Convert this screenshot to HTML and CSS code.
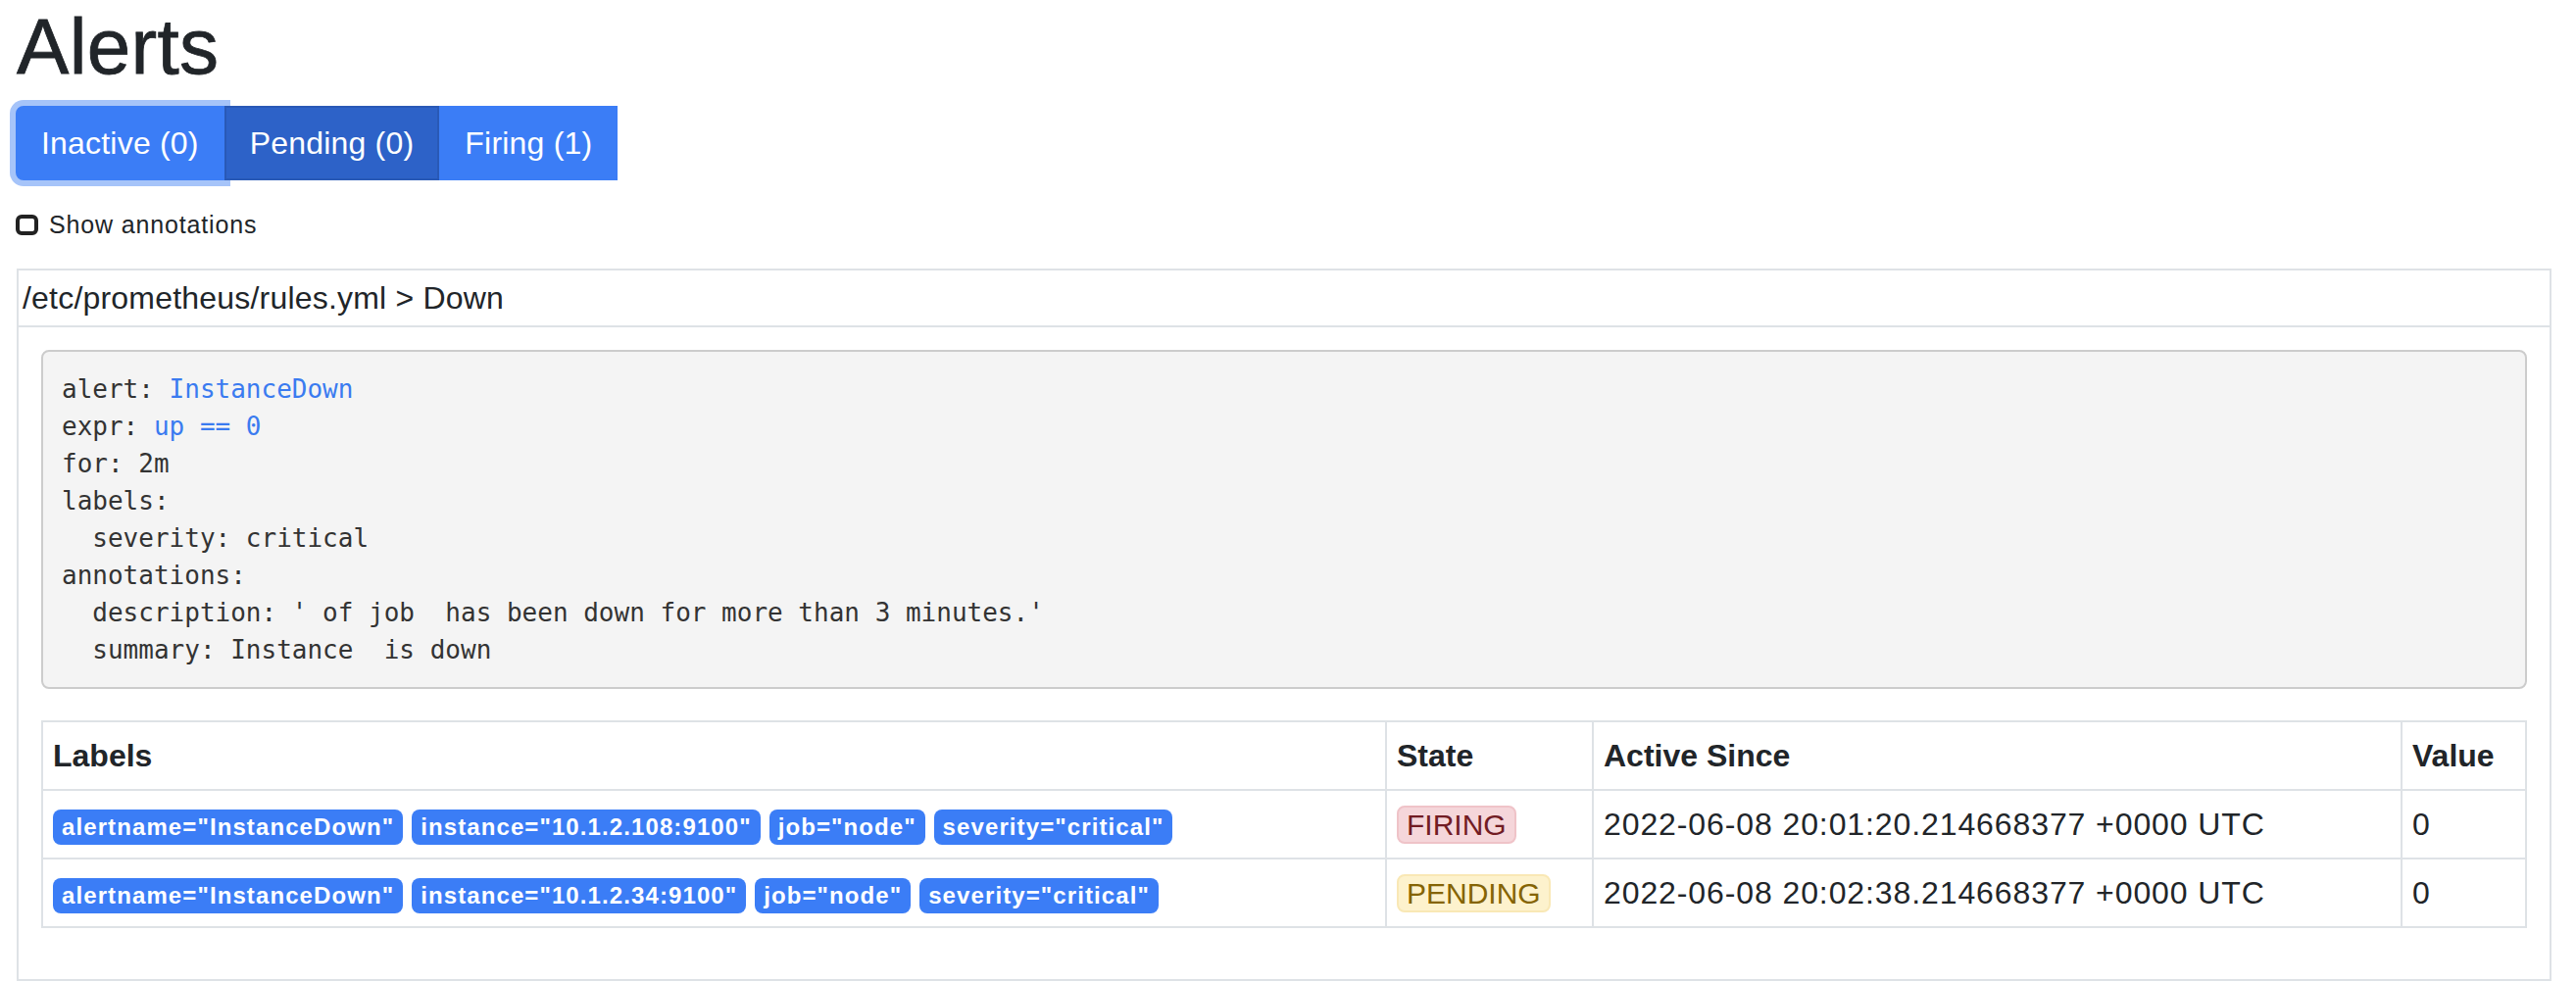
FILE: index.html
```html
<!DOCTYPE html>
<html lang="en">
<head>
<meta charset="utf-8">
<title>Alerts</title>
<link rel="stylesheet" href="styles.css">
</head>
<body>
<div class="page">
  <h1 class="title">Alerts</h1>
  <div class="btn-group">
    <button class="btn btn-focus">Inactive (0)</button><button class="btn btn-active">Pending (0)</button><button class="btn">Firing (1)</button>
  </div>
  <label class="toggle"><input type="checkbox" class="check"><span class="toggle-text">Show annotations</span></label>

  <div class="card">
    <div class="card-header">/etc/prometheus/rules.yml &gt; Down</div>
    <div class="card-body">
<pre class="rule">alert: <span class="hl">InstanceDown</span>
expr: <span class="hl">up == 0</span>
for: 2m
labels:
  severity: critical
annotations:
  description: ' of job  has been down for more than 3 minutes.'
  summary: Instance  is down</pre>
      <table class="alerts">
        <colgroup>
          <col class="c-labels"><col class="c-state"><col class="c-since"><col class="c-value">
        </colgroup>
        <thead>
          <tr><th>Labels</th><th>State</th><th>Active Since</th><th>Value</th></tr>
        </thead>
        <tbody>
          <tr>
            <td><span class="badge">alertname="InstanceDown"</span> <span class="badge">instance="10.1.2.108:9100"</span> <span class="badge">job="node"</span> <span class="badge">severity="critical"</span></td>
            <td><span class="state state-firing">FIRING</span></td>
            <td class="since">2022-06-08 20:01:20.214668377 +0000 UTC</td>
            <td>0</td>
          </tr>
          <tr>
            <td><span class="badge">alertname="InstanceDown"</span> <span class="badge">instance="10.1.2.34:9100"</span> <span class="badge">job="node"</span> <span class="badge">severity="critical"</span></td>
            <td><span class="state state-pending">PENDING</span></td>
            <td class="since">2022-06-08 20:02:38.214668377 +0000 UTC</td>
            <td>0</td>
          </tr>
        </tbody>
      </table>
    </div>
  </div>
</div>
</body>
</html>
```

FILE: styles.css
```css
* { box-sizing: border-box; }

html, body {
  margin: 0;
  background: #ffffff;
}

body {
  font-family: "Liberation Sans", Arial, Helvetica, sans-serif;
  font-size: 32px;
  line-height: 48px;
  color: #212529;
}

.page {
  padding: 0 25px 0 16px;
}

.title {
  margin: 0 0 12px 0;
  padding-left: 1px;
  font-size: 80px;
  line-height: 96px;
  font-weight: 400;
  letter-spacing: 0.3px;
  -webkit-text-stroke: 0.8px #212529;
  color: #212529;
}

.btn-group {
  display: flex;
  align-items: stretch;
}

.btn {
  position: relative;
  font-family: "Liberation Sans", Arial, Helvetica, sans-serif;
  font-size: 32px;
  line-height: 48px;
  letter-spacing: 0.2px;
  color: #ffffff;
  background: #3b7df6;
  border: 2px solid #3b7df6;
  padding: 12px 24px;
  margin: 0;
  border-radius: 0;
  cursor: pointer;
}

.btn-focus {
  border-radius: 8px 0 0 8px;
  box-shadow: 0 0 0 6px #a6c4f9;
  z-index: 1;
}

.btn-active {
  background: #2d62c8;
  border-color: #2959b6;
  z-index: 2;
}

.toggle {
  display: flex;
  align-items: center;
  margin-top: 27px;
  height: 36px;
  font-size: 25px;
  line-height: 36px;
  letter-spacing: 0.85px;
  color: #212529;
}

.check {
  appearance: none;
  -webkit-appearance: none;
  width: 23px;
  height: 21px;
  margin: 0 11px 0 0;
  border: 4px solid #222222;
  border-radius: 6px;
  background: #ffffff;
}

.card {
  margin-top: 27px;
  margin-left: 1px;
  border: 2px solid #dee2e6;
  background: #ffffff;
}

.card-header {
  padding: 4px 4px;
  font-size: 32px;
  line-height: 48px;
  border-bottom: 2px solid #dee2e6;
  letter-spacing: 0.2px;
}

.card-body {
  padding: 23px 23px 22px 23px;
}

.rule {
  margin: 0 0 32px 0;
  padding: 19px 19px;
  font-family: "DejaVu Sans Mono", "Liberation Mono", monospace;
  font-size: 26px;
  line-height: 38px;
  color: #333333;
  background: #f4f4f4;
  border: 2px solid #cccccc;
  border-radius: 8px;
  white-space: pre;
}

.hl {
  color: #3a7bf0;
}

.alerts {
  width: 100%;
  table-layout: fixed;
  border-collapse: collapse;
  border: 2px solid #dee2e6;
  margin-bottom: 30px;
}

.c-state { width: 211px; }
.c-since { width: 825px; }
.c-value { width: 127px; }

.alerts th,
.alerts td {
  border: 2px solid #dee2e6;
  padding: 10px 10px;
  text-align: left;
  font-size: 32px;
  line-height: 48px;
  vertical-align: top;
  white-space: nowrap;
}

.alerts th {
  font-weight: 700;
  vertical-align: bottom;
}

.since {
  letter-spacing: 0.9px;
}

.badge {
  display: inline-block;
  padding: 6px 9px;
  font-size: 24px;
  line-height: 24px;
  font-weight: 700;
  letter-spacing: 1.1px;
  color: #ffffff;
  background: #3b7df6;
  border-radius: 8px;
}

.state {
  display: inline-block;
  padding: 3px 8px 2px 8px;
  font-size: 30px;
  line-height: 30px;
  border: 2px solid;
  border-radius: 8px;
}

.state-firing {
  color: #721c24;
  background: #f5d6da;
  border-color: #efc3c8;
}

.state-pending {
  color: #856404;
  background: #fdf2cd;
  border-color: #f9e8b5;
}
```
